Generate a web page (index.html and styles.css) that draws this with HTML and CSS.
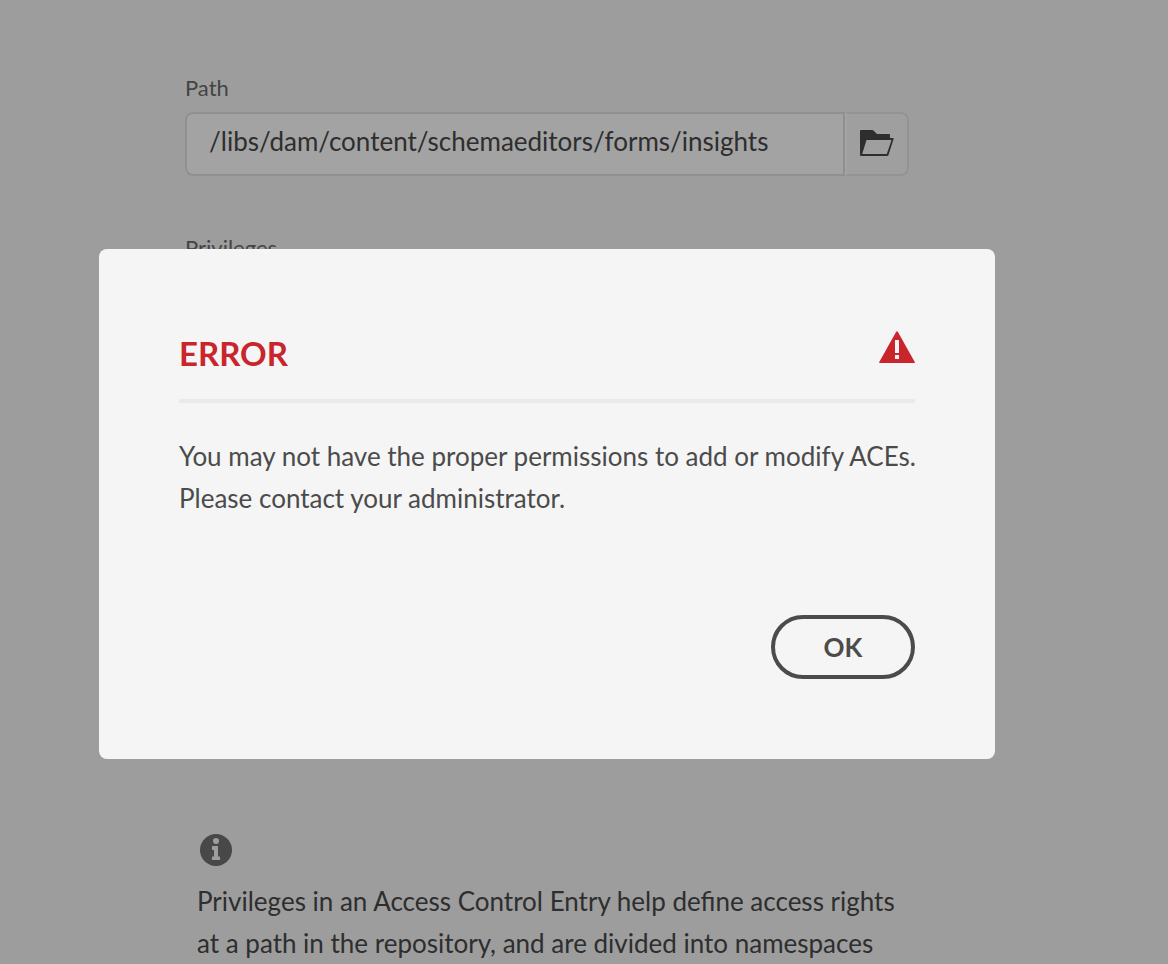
FILE: index.html
```html
<!DOCTYPE html>
<html lang="en">
  <head>
    <meta charset="utf-8" />
    <title>Edit ACE</title>
    <meta name="viewport" content="width=device-width, initial-scale=1.0" />
    <link rel="stylesheet" href="styles.css">
  </head>
  <body>
    <form class="ace-form">
      <div class="field">
        <label for="path">Path</label>
        <div class="input-group">
          <input type="text" id="path" value="/libs/dam/content/schemaeditors/forms/insights" />
          <button type="button" class="browse-btn" aria-label="Browse">
            <svg width="34" height="26" viewBox="0 0 34 26" aria-hidden="true">
              <path fill="currentColor" fill-rule="evenodd" d="M1 0H12Q13 0 14 1L17 4H29Q30 4 30 5V8H33Q34 8 33.600 9L28.500 25Q28.200 26 27 26H1Q0 26 0 25V1Q0 0 1 0ZM6.500 10L2.200 24H26.800L31.500 10Z" />
            </svg>
          </button>
        </div>
      </div>

      <div class="field">
        <label for="privileges">Privileges</label>
        <textarea id="privileges"></textarea>
      </div>

      <div class="info">
        <svg width="32" height="32" viewBox="0 0 32 32" aria-hidden="true">
          <circle class="info-disc" cx="16" cy="16" r="16" />
          <circle class="info-mark" cx="16" cy="7" r="3" />
          <path class="info-mark" d="M12 12H18V22.500H20V26H12V22.500H14V16H12Z" />
        </svg>
        <p>Privileges in an Access Control Entry help define access rights at a path in the repository, and are divided into namespaces</p>
      </div>
    </form>

    <div class="dialog-wrapper">
      <div class="dialog" role="alertdialog" aria-labelledby="dialogTitle" aria-describedby="dialogText">
        <div class="dialog-header">
          <h2 id="dialogTitle">ERROR</h2>
          <svg width="36" height="32" viewBox="0 0 36 32" aria-hidden="true">
            <path fill="#c9252d" d="M17.200 .8Q18 -.4 18.800 .8L35.600 30.800Q36.200 32 35 32H1Q-.2 32 .4 30.800Z" />
            <path fill="#f5f5f5" d="M16 9H20V22H16ZM16 24H20V28H16Z" />
          </svg>
        </div>
        <p id="dialogText">You may not have the proper permissions to add or modify ACEs.<br>Please contact your administrator.</p>
        <div class="dialog-footer">
          <button type="button" class="ok-btn">OK</button>
        </div>
      </div>
    </div>
  </body>
</html>
```

FILE: styles.css
```css
* {
  box-sizing: border-box;
}

body {
  margin: 0;
  height: 100vh;
  overflow: hidden;
  background: #9d9d9d;
  color: #2e2e2e;
  font-family: Lato, "Open Sans", sans-serif;
  font-size: 26px;
  line-height: 42px;
}

.ace-form {
  padding: 72px 259px 0 185px;
}

.field {
  margin-bottom: 56px;
}

.field label {
  display: block;
  height: 40px;
  font-size: 22px;
  line-height: 32px;
  color: #444444;
}

.input-group {
  display: flex;
}

.input-group input {
  flex: 1;
  min-width: 0;
  height: 64px;
  padding: 0 24px 6px 22px;
  background: #a3a3a3;
  border: 2px solid #909090;
  border-radius: 8px 0 0 8px;
  color: inherit;
  font: inherit;
}

.browse-btn {
  display: flex;
  align-items: center;
  justify-content: center;
  width: 64px;
  height: 64px;
  padding: 0 0 2px;
  background: #9f9f9f;
  border: 2px solid #939393;
  border-left-color: #a3a3a3;
  border-radius: 0 8px 8px 0;
  color: #2e2e2e;
}

.field textarea {
  display: block;
  width: 100%;
  height: 464px;
  background: #a3a3a3;
  border: 2px solid #909090;
  border-radius: 8px;
  resize: none;
}

.info {
  margin-top: 98px;
  padding: 0 8px 0 12px;
}

.info svg {
  display: block;
  margin: 0 3px 14px;
}

.info p {
  margin: 0;
}

.info-disc {
  fill: #484848;
}

.info-mark {
  fill: #9d9d9d;
}

.dialog-wrapper {
  position: fixed;
  inset: 0;
  padding: 249px 173px 0 99px;
}

.dialog {
  padding: 80px 76px 80px 80px;
  background: #f5f5f5;
  border-radius: 8px;
  color: #4b4b4b;
}

.dialog-header {
  display: flex;
  align-items: flex-start;
  justify-content: space-between;
  height: 74px;
  margin-right: 4px;
  padding-top: 2px;
  border-bottom: 4px solid #eaeaea;
}

.dialog h2 {
  margin: 0;
  color: #c9252d;
  font-size: 33px;
  font-weight: 700;
  line-height: 44px;
}

.dialog p {
  margin: 32px 0 96px;
}

.dialog-footer {
  display: flex;
  justify-content: flex-end;
  margin-right: 4px;
}

.ok-btn {
  width: 144px;
  height: 64px;
  padding: 0;
  background: transparent;
  border: 4px solid #4b4b4b;
  border-radius: 32px;
  color: #4b4b4b;
  font: inherit;
  font-weight: 700;
}
```
